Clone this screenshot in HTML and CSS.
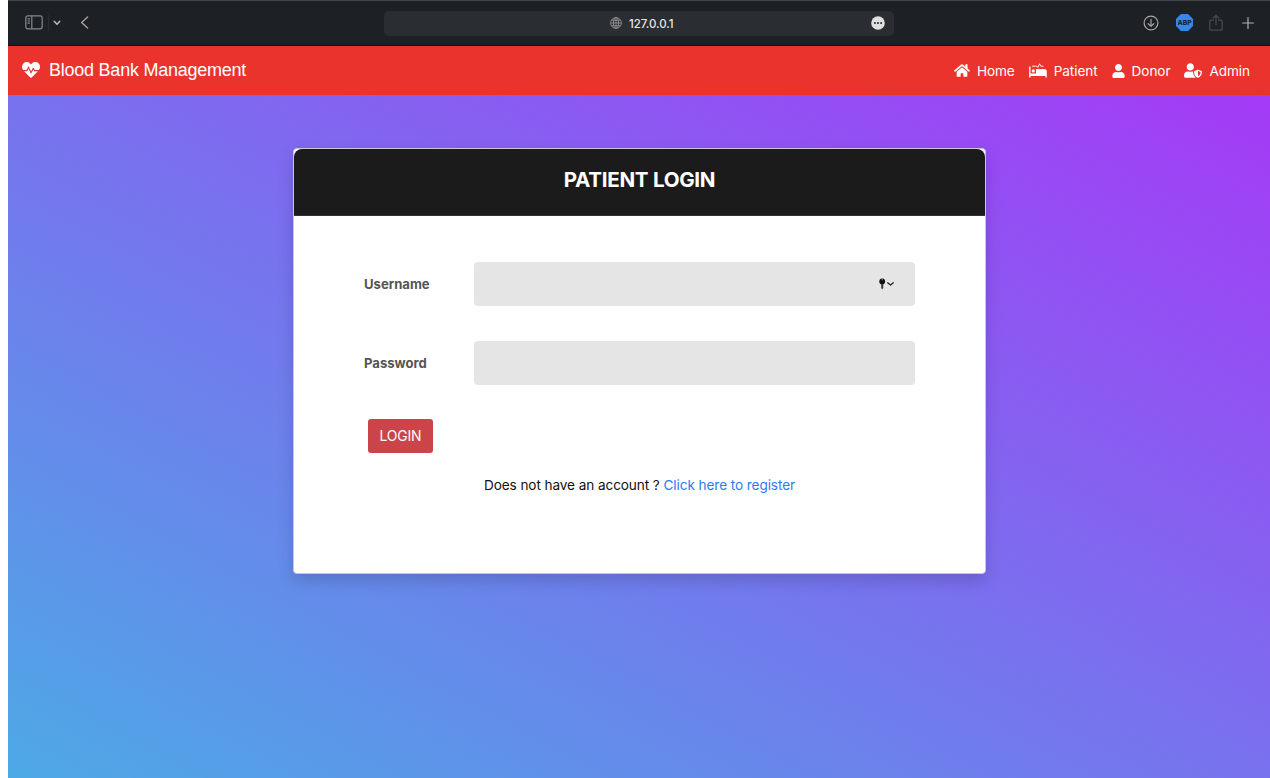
FILE: index.html
```html
<!DOCTYPE html>
<html lang="en">
<head>
<meta charset="utf-8">
<title>Blood Bank Management</title>
<link rel="stylesheet" href="styles.css">
</head>
<body>
<div class="window">
  <div class="toolbar">
    <div class="tools-left">
      <svg class="i-sidebar" width="18" height="15" viewBox="0 0 18 15" fill="none" stroke="#85888c" stroke-width="1.2"><rect x=".8" y=".8" width="16.4" height="13" rx="2"/><path d="M6.8 1v13M2.5 3.8h2.4M2.5 6h2.4M2.5 8.2h2.4"/></svg>
      <span class="divider"></span>
      <svg class="i-down" width="8" height="6" viewBox="0 0 8 6" fill="none" stroke="#b9bbbd" stroke-width="1.5" stroke-linecap="round" stroke-linejoin="round"><path d="M1.2 1.2 4 4.2l2.8-3"/></svg>
      <svg width="9" height="13" viewBox="0 0 9 13" fill="none" stroke="#a5a7a9" stroke-width="1.3" stroke-linecap="round" stroke-linejoin="round"><path d="M7.6.9 1.6 6.5l6 5.6"/></svg>
    </div>
    <div class="address">
      <svg class="i-globe" width="12" height="12" viewBox="0 0 12 12" fill="none" stroke="#8d9093" stroke-width=".9"><circle cx="6" cy="6" r="5.4"/><ellipse cx="6" cy="6" rx="2.6" ry="5.4"/><path d="M6 .6v10.8M.6 6h10.8M1.4 3.3h9.2M1.4 8.700h9.2"/></svg>
      <span class="host">127.0.0.1</span>
      <svg class="i-more" width="14" height="14" viewBox="0 0 14 14"><circle cx="7" cy="7" r="6.8" fill="#dfe0e1"/><g fill="#2a2d31"><circle cx="3.9" cy="7" r="1.05"/><circle cx="7" cy="7" r="1.05"/><circle cx="10.1" cy="7" r="1.05"/></g></svg>
    </div>
    <div class="tools-right">
      <svg width="16" height="16" viewBox="0 0 16 16" fill="none" stroke="#a4a6a8" stroke-width="1.2" stroke-linecap="round" stroke-linejoin="round"><circle cx="8" cy="8" r="6.9"/><path d="M8 4.3v7M5.2 8.7 8 11.4l2.8-2.7"/></svg>
      <span class="abp">ABP</span>
      <svg width="14" height="18" viewBox="0 0 14 18" fill="none" stroke="#484b4f" stroke-width="1.2" stroke-linecap="round" stroke-linejoin="round"><path d="M4.5 6.2H1.8a1 1 0 0 0-1 1v8a1 1 0 0 0 1 1h10.4a1 1 0 0 0 1-1v-8a1 1 0 0 0-1-1H9.5M7 11V1.4M4.2 4 7 1.2 9.8 4"/></svg>
      <svg width="12" height="12" viewBox="0 0 12 12" stroke="#b0b2b4" stroke-width="1.2" stroke-linecap="round"><path d="M6 .6v10.8M.6 6h10.8"/></svg>
    </div>
  </div>

  <nav class="navbar">
    <a class="brand">
      <svg width="18" height="18" viewBox="0 0 512 512" fill="#fff"><path d="M320.200 243.800l-49.700 99.400c-6 12.100-23.400 11.700-28.900-.6l-56.900-126.300-30 71.700H60.600l182.500 186.500c7.100 7.300 18.600 7.300 25.700 0L451.400 288H342.300l-22.100-44.200zM473.700 73.900l-2.400-2.500c-51.500-52.600-135.800-52.600-187.400 0L256 100l-27.900-28.500c-51.500-52.700-135.900-52.700-187.400 0l-2.400 2.400C-10.400 123.700-12.500 203 31 256h102.400l35.900-86.200c5.400-12.900 23.600-13.200 29.400-.4l58.200 129.300 49-97.900c5.900-11.800 22.700-11.800 28.600 0l27.600 55.200H481c43.500-53 41.400-132.300-7.300-182.100z"/></svg>
      <span>Blood Bank Management</span>
    </a>
    <div class="links">
      <a><svg width="16" height="15" viewBox="0 0 576 512" fill="#fff"><path d="M280.400 148.300 96 300.100V464a16 16 0 0 0 16 16l112.100-.3a16 16 0 0 0 15.900-16V368a16 16 0 0 1 16-16h64a16 16 0 0 1 16 16v95.600a16 16 0 0 0 16 16.100L464 480a16 16 0 0 0 16-16V300L295.700 148.300a12.200 12.200 0 0 0-15.300 0zM571.600 251.500 488 182.600V44.100a12 12 0 0 0-12-12h-56a12 12 0 0 0-12 12v72.600L318.500 43a48 48 0 0 0-61 0L4.300 251.500a12 12 0 0 0-1.600 16.900l25.500 31A12 12 0 0 0 45.200 301l235.200-193.700a12.200 12.200 0 0 1 15.300 0L530.900 301a12 12 0 0 0 16.900-1.600l25.500-31a12 12 0 0 0-1.700-16.900z"/></svg><span>Home</span></a>
      <a><svg width="18" height="15" viewBox="0 0 18 15" fill="#fff"><path d="M.2 3.400h1.300v7.200H7V5.900h8.100a2.700 2.700 0 0 1 2.700 2.700v5.800h-1.400v-1.500H1.500v1.500H.2z"/><circle cx="4.300" cy="7.900" r="1.600"/><path d="M3 3.200h4.800l1 1.300 1.800-3.700 1.100 2.400h2.800" fill="none" stroke="#fff" stroke-width=".9"/></svg><span>Patient</span></a>
      <a><svg width="13" height="14" viewBox="0 0 448 512" fill="#fff"><path d="M224 256c70.700 0 128-57.300 128-128S294.700 0 224 0 96 57.300 96 128s57.300 128 128 128zm89.600 32h-16.700a174 174 0 0 1-145.800 0h-16.700C60.200 288 0 348.200 0 422.400V464a48 48 0 0 0 48 48h352a48 48 0 0 0 48-48v-41.600c0-74.200-60.200-134.400-134.400-134.400z"/></svg><span>Donor</span></a>
      <a><svg width="18" height="15" viewBox="0 0 640 512" fill="#fff"><path d="M622.300 271.100l-115.200-45c-4.100-1.600-12.600-3.700-22.200 0l-115.200 45c-10.700 4.200-17.700 14-17.700 24.900 0 111.600 68.700 188.800 132.900 213.900 9.600 3.700 18 1.600 22.200 0C558.400 489.900 640 420.500 640 296c0-10.900-7-20.700-17.700-24.900zM496 462.400V273.300l95.500 37.300c-5.600 87.100-60.900 135.400-95.500 151.800zM224 256c70.700 0 128-57.300 128-128S294.700 0 224 0 96 57.300 96 128s57.300 128 128 128zm96 40c0-2.500.8-4.800 1.100-7.200-2.500-.1-4.900-.8-7.500-.8h-16.700a174 174 0 0 1-145.800 0h-16.700C60.200 288 0 348.200 0 422.400V464a48 48 0 0 0 48 48h352c6.800 0 13.300-1.500 19.200-4C363.200 463 320 387.200 320 296z"/></svg><span>Admin</span></a>
    </div>
  </nav>

  <main class="page">
    <section class="card">
      <header class="card-head"><h2>PATIENT LOGIN</h2></header>
      <form class="card-body">
        <div class="field">
          <label>Username</label>
          <div class="input">
            <svg width="16" height="12" viewBox="0 0 16 12"><circle cx="3.200" cy="3.500" r="2.900" fill="#111"/><circle cx="3.200" cy="1.700" r=".6" fill="#999"/><path d="M2.100 6h2.200v3.900L3.200 11.400l-1.100-1.500z" fill="#444"/><path d="M8.700 4.800l2.800 2.300 2.800-2.300" fill="none" stroke="#222" stroke-width="1.300" stroke-linecap="round" stroke-linejoin="round"/></svg>
          </div>
        </div>
        <div class="field">
          <label>Password</label>
          <div class="input"></div>
        </div>
        <button class="login" type="button">LOGIN</button>
        <p class="register">Does not have an account ? <a>Click here to register</a></p>
      </form>
    </section>
  </main>
</div>
</body>
</html>
```
FILE: styles.css
```css
* { box-sizing: border-box; }
body { margin: 0; background: #fff; font-family: Inter, "Liberation Sans", sans-serif; overflow: hidden; }
.window { margin-left: 8px; height: 778px; display: flex; flex-direction: column; }

.toolbar { height: 46px; flex: none; background: #1d2024; border-top: 1px solid #42464a; border-bottom: 1px solid #171012; display: grid; grid-template-columns: 376px 510px 1fr; align-items: center; }
.tools-left { display: flex; align-items: center; padding: 0 0 1px 17px; }
.divider { width: 1px; height: 16px; background: #2a2d31; margin: 0 4px 0 5px; }
.i-down { margin-right: 19px; }
.address { height: 25px; border-radius: 5px; background: #2a2d31; display: flex; align-items: center; padding: 0 9px 0 226px; }
.i-globe { margin-bottom: 1px; }
.host { margin: 1px 0 0 7px; font-size: 11.5px; font-weight: 500; color: #e6e6e7; letter-spacing: -.05px; }
.i-more { margin-left: auto; margin-bottom: 1px; }
.tools-right { display: flex; align-items: center; justify-content: flex-end; padding: 0 16px 1px 0; }
.tools-right svg:nth-child(3) { margin: 0 19px 0 16px; }
.abp { width: 17px; height: 17px; margin-left: 17px; background: #3489e6; clip-path: polygon(29% 0, 71% 0, 100% 29%, 100% 71%, 71% 100%, 29% 100%, 0 71%, 0 29%); font-size: 6.8px; font-weight: 800; line-height: 17px; text-align: center; color: #16283c; }

.navbar { height: 49px; flex: none; background: #eb332e; color: #fff; display: flex; justify-content: space-between; align-items: center; padding: 0 20px 0 14px; }
.brand { display: flex; align-items: center; gap: 9px; font-family: "Liberation Sans", sans-serif; font-size: 18px; letter-spacing: -.24px; }
.brand svg { margin-bottom: 2px; }
.links { display: flex; align-items: center; gap: 14px; font-size: 13.6px; letter-spacing: -.08px; }
.links a { display: flex; align-items: center; gap: 7px; }

.page { flex: 1; display: flex; justify-content: center; align-items: flex-start; padding-top: 53px; background: linear-gradient(to top right, #4da9e6, #a43af6); }
.card { width: 693px; height: 426px; margin-left: 1px; border: 1px solid #c9c6dc; border-radius: 4px; background: #fff; box-shadow: 0 7px 16px rgba(0, 0, 0, .15); }
.card-head { height: 67px; background: #1b1b1b; border-bottom: 1px solid #333; border-radius: 8px 8px 0 0; text-align: center; padding-top: 17px; }
.card-head h2 { margin: 0; font-size: 20.6px; line-height: 27px; font-weight: 700; letter-spacing: -.3px; color: #fff; }
.card-body { padding: 46px 70px 0; display: flex; flex-direction: column; align-items: flex-start; }
.field { width: 100%; height: 44px; margin-bottom: 35px; display: grid; grid-template-columns: 110px 441px; align-items: center; }
.field label { font-size: 13.1px; font-weight: 700; color: #555; }
.input { height: 44px; border-radius: 4px; background: #e5e5e5; display: flex; align-items: center; justify-content: flex-end; padding-right: 20px; }
.login { width: 65px; height: 34px; margin: -1px 0 0 4px; padding: 0; border: 0; border-radius: 3px; background: #cb444a; color: #fff; font: 13.9px Inter, sans-serif; letter-spacing: -.15px; }
.register { margin: 22px 0 0; width: 100%; text-align: center; font-size: 13.6px; line-height: 20px; letter-spacing: -.085px; color: #111; }
.register a { color: #2b7cf6; }
```
